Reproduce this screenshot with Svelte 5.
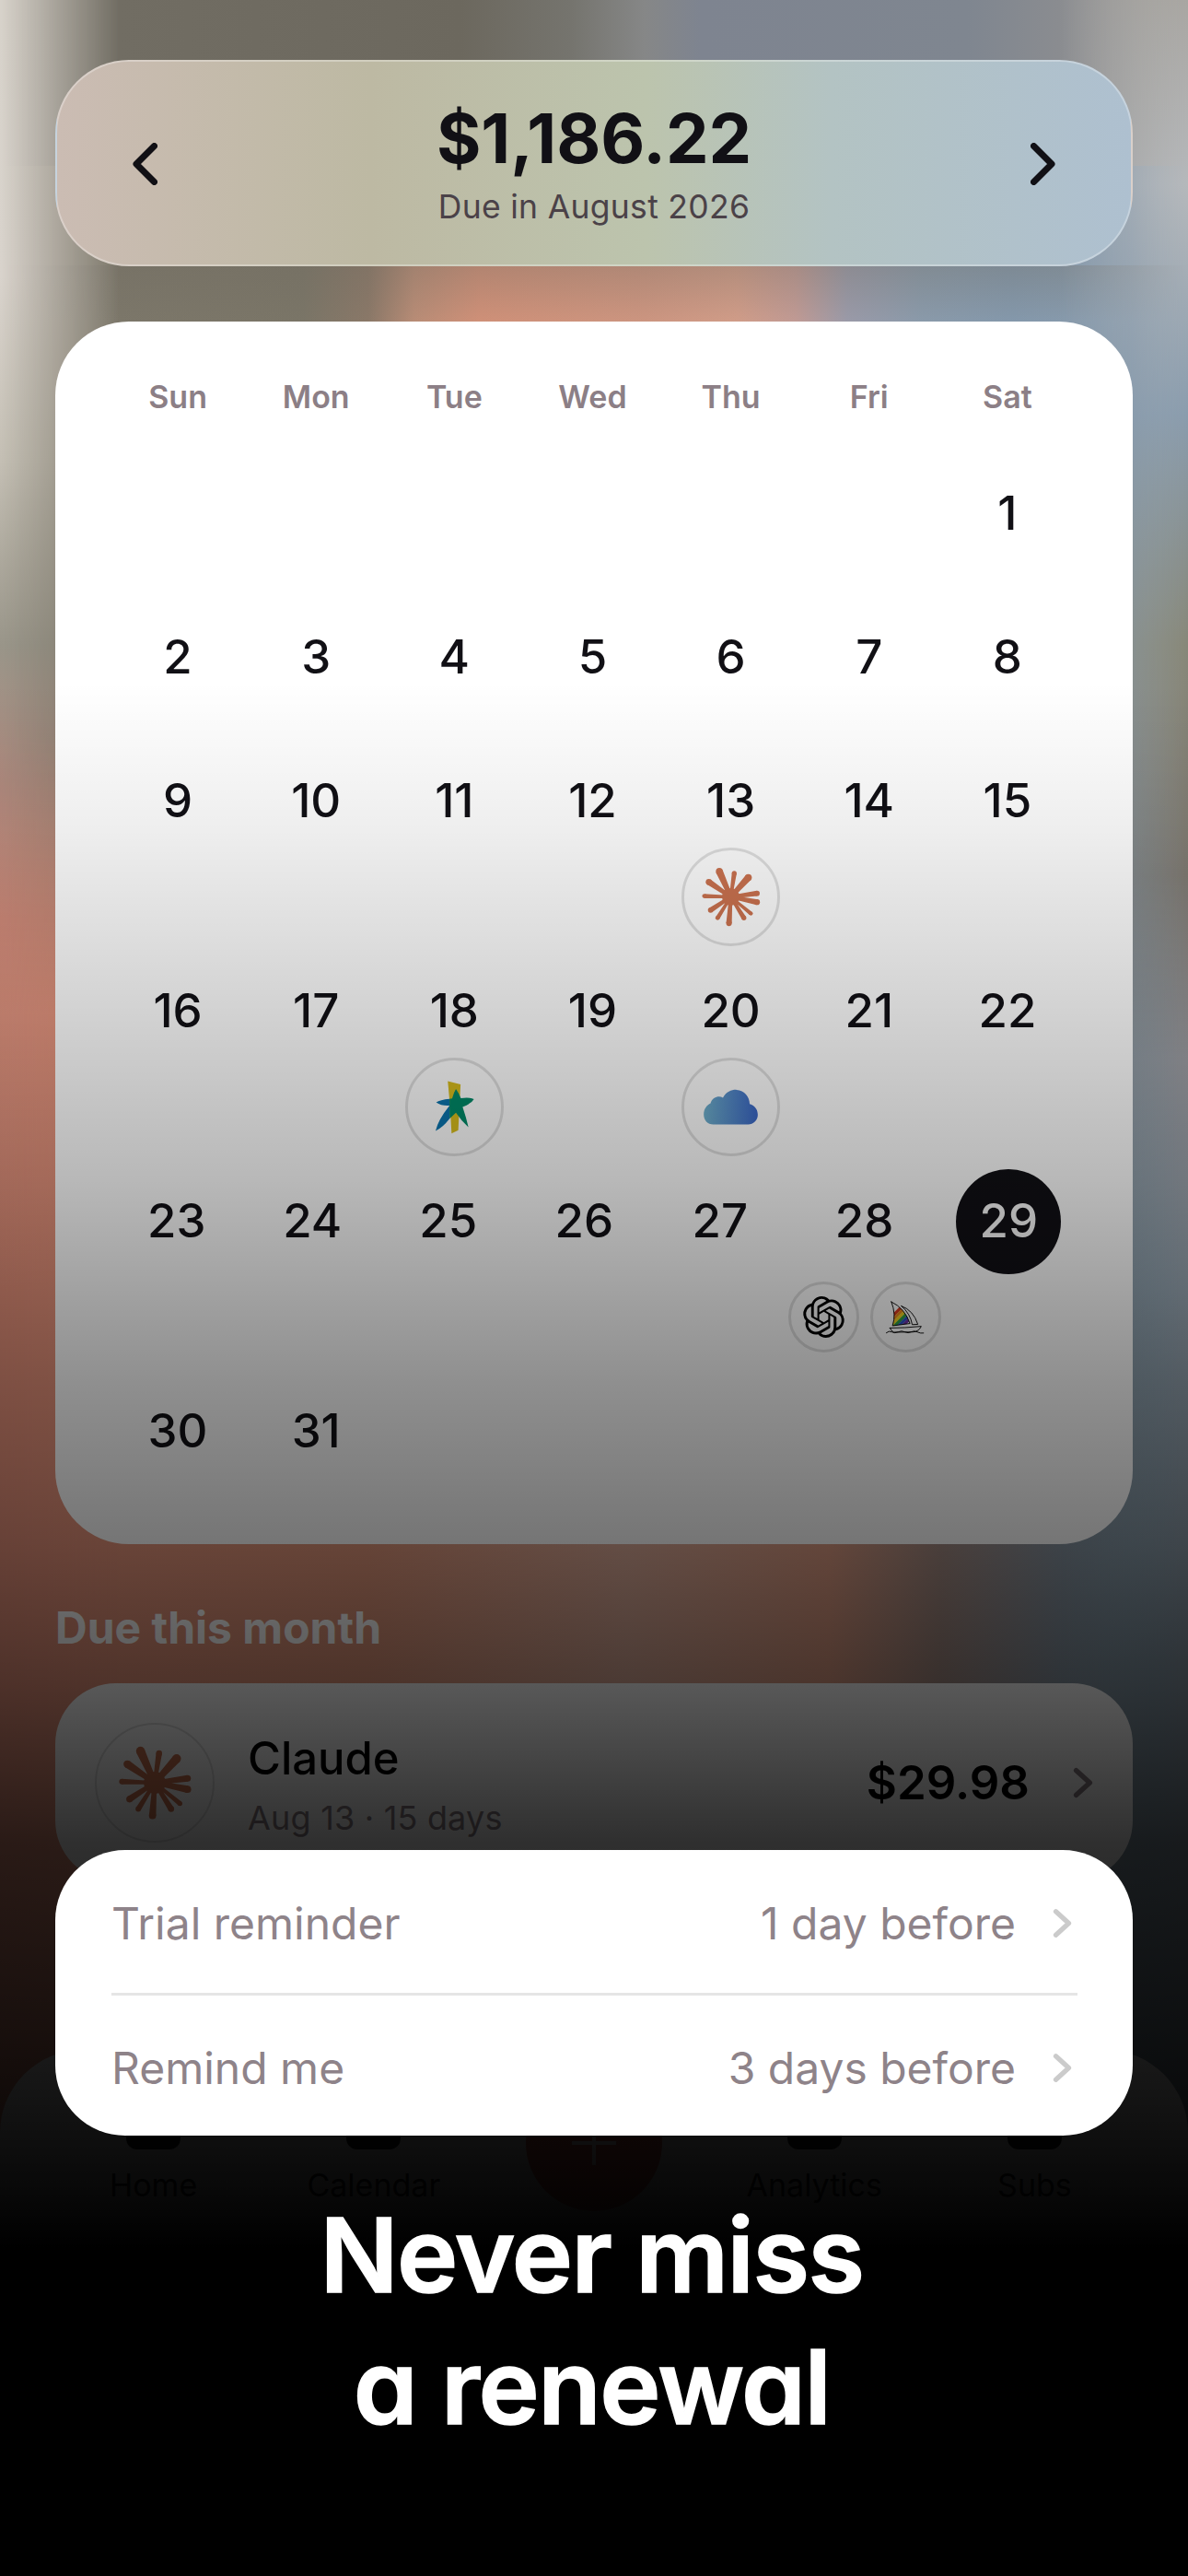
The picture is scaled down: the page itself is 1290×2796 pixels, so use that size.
<script>
  const weeks = [
    [null,null,null,null,null,null,1],
    [2,3,4,5,6,7,8],
    [9,10,11,12,{n:13,icon:'claude'},14,15],
    [16,17,{n:18,icon:'star'},19,{n:20,icon:'cloud'},21,22],
    [23,24,25,26,27,{n:28,pair:true},{n:29,today:true}],
    [30,31,null,null,null,null,null]
  ];
  const days = ['Sun','Mon','Tue','Wed','Thu','Fri','Sat'];
  const tabs = ['Home','Calendar','','Analytics','Subs'];
  const reminders = [['Trial reminder','1 day before'],['Remind me','3 days before']];
  const tips = [[-13,-29,8],[4,-27,5.5],[20,-22,8],[30,-4,6],[30,6,6.5],[23,19,4.5],[15,24,5.5],[-2,30,6.5],[-15,24,5],[-23,15,6],[-30,-1,5],[-25,-17,7]];
  const rays = tips.map(([x,y,w]) => {
    const l = Math.hypot(x,y), nx = -y/l*w/2, ny = x/l*w/2;
    return `M${(nx*.6).toFixed(1)} ${(ny*.6).toFixed(1)}L${(x+nx).toFixed(1)} ${(y+ny).toFixed(1)}L${(x-nx).toFixed(1)} ${(y-ny).toFixed(1)}L${(-nx*.6).toFixed(1)} ${(-ny*.6).toFixed(1)}Z`;
  }).join('');
  const caps = tips.map(([x,y,w]) => ({x,y,r:w/2}));
  const stripes = [['#d93a22',513],['#ee8a1c',523],['#efd01e',533],['#2f9e44',543],['#2952c4',553],['#6a2fa6',563]];
</script>

{#snippet claude()}
  <svg viewBox="-53 -53 106 106" class="logo">
    <path d={rays} fill="#cc7350"/>
    {#each caps as c}<circle cx={c.x} cy={c.y} r={c.r} fill="#cc7350"/>{/each}
    <circle r="10" fill="#cc7350"/>
  </svg>
{/snippet}

{#snippet star()}
  <svg viewBox="125 745 320 320" class="logo">
    <path d="M262 816L306 827L298 985L275 996L270 905Z" fill="#d8bd1d"/>
    <path d="M222 889Q235 880 268 877L270 900L268 945Q245 975 220 987Q228 950 268 900Q240 902 222 889Z" fill="#0a74ae"/>
    <path d="M290 843Q302 860 307 875Q335 870 352 878Q345 892 313 905Q325 940 333 975Q310 955 290 925L268 945L268 877L277 876Q282 855 290 843Z" fill="#008a68"/>
  </svg>
{/snippet}

{#snippet cloud()}
  <svg viewBox="1025 745 320 320" class="logo">
    <defs>
      <linearGradient id="cloudfill" x1="0" x2="1" y1="0" y2="0">
        <stop offset="0" stop-color="#6fb0cc"/><stop offset="1" stop-color="#3a66c6"/>
      </linearGradient>
    </defs>
    <path d="M1125 965C1105 965 1092 950 1092 930C1092 910 1105 897 1115 893C1122 870 1145 865 1158 873C1170 852 1190 845 1205 846C1232 848 1250 870 1250 895C1268 900 1278 915 1278 932C1278 952 1262 965 1245 965Z" fill="url(#cloudfill)"/>
  </svg>
{/snippet}

{#snippet openai()}
  <svg viewBox="-6.9 -6.9 37.8 37.8" class="logo">
    <path fill="#000" d="M22.2819 9.8211a5.9847 5.9847 0 0 0-.5157-4.9108 6.0462 6.0462 0 0 0-6.5098-2.9A6.0651 6.0651 0 0 0 4.9807 4.1818a5.9847 5.9847 0 0 0-3.9977 2.9 6.0462 6.0462 0 0 0 .7427 7.0966 5.98 5.98 0 0 0 .511 4.9107 6.051 6.051 0 0 0 6.5146 2.9001A5.9847 5.9847 0 0 0 13.2599 24a6.0557 6.0557 0 0 0 5.7718-4.2058 5.9894 5.9894 0 0 0 3.9977-2.9001 6.0557 6.0557 0 0 0-.7475-7.0729zm-9.022 12.6081a4.4755 4.4755 0 0 1-2.8764-1.0408l.1419-.0804 4.7783-2.7582a.7948.7948 0 0 0 .3927-.6813v-6.7369l2.02 1.1686a.071.071 0 0 1 .038.052v5.5826a4.504 4.504 0 0 1-4.4945 4.4944zm-9.6607-4.1254a4.4708 4.4708 0 0 1-.5346-3.0137l.142.0852 4.783 2.7582a.7712.7712 0 0 0 .7806 0l5.8428-3.3685v2.3324a.0804.0804 0 0 1-.0332.0615L9.74 19.9502a4.4992 4.4992 0 0 1-6.1408-1.6464zM2.3408 7.8956a4.485 4.485 0 0 1 2.3655-1.9728V11.6a.7664.7664 0 0 0 .3879.6765l5.8144 3.3543-2.0201 1.1685a.0757.0757 0 0 1-.071 0l-4.8303-2.7865A4.504 4.504 0 0 1 2.3408 7.872zm16.5963 3.8558L13.1038 8.364 15.1192 7.2a.0757.0757 0 0 1 .071 0l4.8303 2.7913a4.4944 4.4944 0 0 1-.6765 8.1042v-5.6772a.79.79 0 0 0-.407-.667zm2.0107-3.0231l-.142-.0852-4.7735-2.7818a.7759.7759 0 0 0-.7854 0L9.409 9.2297V6.8974a.0662.0662 0 0 1 .0284-.0615l4.8303-2.7866a4.4992 4.4992 0 0 1 6.6802 4.66zM8.3065 12.863l-2.02-1.1638a.0804.0804 0 0 1-.038-.0567V6.0742a4.4992 4.4992 0 0 1 7.3757-3.4537l-.142.0805L8.704 5.459a.7948.7948 0 0 0-.3927.6813zm1.0976-2.3654l2.602-1.4998 2.6069 1.4998v2.9994l-2.5974 1.4997-2.6067-1.4997Z"/>
  </svg>
{/snippet}

{#snippet boat()}
  <svg viewBox="378 423 230 232" class="logo">
    <defs>
      <clipPath id="sailclip"><path d="M442 485Q490 508 508 562L446 570Q460 530 442 485Z"/></clipPath>
    </defs>
    <g clip-path="url(#sailclip)">
      <g transform="rotate(-45 480 540)" fill="none" stroke-width="10.5">
        {#each stripes as s}<path d="M400 {s[1]}H560" stroke={s[0]}/>{/each}
      </g>
    </g>
    <g fill="none" stroke="#000" stroke-width="3" stroke-linejoin="round" stroke-linecap="round">
      <path d="M442 485Q490 508 508 562L446 570Q460 530 442 485Z"/>
      <path d="M478 500Q520 515 536 565L516 566Q510 528 478 500Z"/>
      <path d="M437 578Q490 578 548 572Q540 590 520 592L450 593Q441 588 437 578Z"/>
      <path d="M424 595Q434 586 444 592T466 592T490 592T512 592T534 592T556 596"/>
    </g>
  </svg>
{/snippet}

{#snippet chevron(cls)}
  <svg viewBox="0 0 24 36" class={cls}><path d="M4 3.5L20 18L4 32.5" fill="none" stroke="currentColor" stroke-linecap="round" stroke-linejoin="round" stroke-width="6"/></svg>
{/snippet}

<div class="page">
  <div class="bg">
    <div class="band-top"></div>
    <div class="strip-left"></div>
    <div class="strip-right"></div>
  </div>

  <header class="summary">
    <svg viewBox="0 0 27 46" class="nav"><path d="M23.5 3.5L4 23L23.5 42.5" fill="none" stroke="currentColor" stroke-width="7" stroke-linecap="round" stroke-linejoin="round"/></svg>
    <div class="totals">
      <div class="amount">$1,186.22</div>
      <div class="due">Due in August 2026</div>
    </div>
    <svg viewBox="0 0 27 46" class="nav"><path d="M3.5 3.5L23 23L3.5 42.5" fill="none" stroke="currentColor" stroke-width="7" stroke-linecap="round" stroke-linejoin="round"/></svg>
  </header>

  <section class="calendar">
    <div class="weekdays">
      {#each days as d}<div class="weekday">{d}</div>{/each}
    </div>
    {#each weeks as week, i}
      <div class="week" class:tall={i === 4}>
        {#each week as day}
          {@const n = day && typeof day === 'object' ? day.n : day}
          <div class="cell">
            {#if n}
              <div class="num" class:today={day?.today}>{n}</div>
            {/if}
            {#if day?.icon}
              <div class="badge">
                {#if day.icon === 'claude'}{@render claude()}{:else if day.icon === 'star'}{@render star()}{:else}{@render cloud()}{/if}
              </div>
            {/if}
            {#if day?.pair}
              <div class="pair">
                <div class="badge small">{@render openai()}</div>
                <div class="badge small">{@render boat()}</div>
              </div>
            {/if}
          </div>
        {/each}
      </div>
    {/each}
  </section>

  <h2 class="section">Due this month</h2>

  <div class="subscription">
    <div class="sub-icon">{@render claude()}</div>
    <div class="sub-text">
      <div class="sub-name">Claude</div>
      <div class="sub-date">Aug 13 · 15 days</div>
    </div>
    <div class="sub-price">$29.98</div>
    {@render chevron('sub-chevron')}
  </div>

  <nav class="tabbar">
    {#each tabs as t}
      <div class="tab">
        {#if t}
          <div class="tab-icon"></div>
          <div class="tab-label">{t}</div>
        {:else}
          <div class="add"><span class="plus"></span></div>
        {/if}
      </div>
    {/each}
  </nav>

  <div class="fade"></div>

  <div class="promo">
    <div class="reminders">
      {#each reminders as r, i}
        {#if i}<div class="divider"></div>{/if}
        <div class="reminder" class:second={i === 1}>
          <span class="r-label">{r[0]}</span>
          <span class="r-value">{r[1]}</span>
          {@render chevron('r-chevron')}
        </div>
      {/each}
    </div>
    <h1 class="headline"><span>Never miss</span><span>a renewal</span></h1>
  </div>
</div>

<style>
  :global(body) { margin: 0; background: #000; }
  .page {
    position: relative;
    width: 1290px;
    height: 2796px;
    overflow: hidden;
    font-family: Inter, "Liberation Sans", sans-serif;
    color: #111015;
    display: flow-root;
    background: #000;
  }
  .bg {
    position: absolute;
    inset: 0;
    background: linear-gradient(90deg, #e8947c 0, #dd9479 400px, #d8a896 680px, #d89880 900px, #a08880 1020px, #84909c 1150px, #80a0b0 1290px);
  }
  .band-top {
    position: absolute;
    inset: 0;
    background:
      linear-gradient(180deg, rgba(110,105,95,.3), rgba(110,105,95,0)) 0 288px / 100% 61px no-repeat,
      linear-gradient(90deg, #716d63 130px, #6c685e 500px, #75746e 620px, #868787 700px, #7e8490 760px, #7f8690 1050px, #8a8c90 1150px, #aeaba6 1290px) 0 0 / 100% 180px no-repeat,
      linear-gradient(90deg, #7c776a 100px, #7a7567 330px, #8a7868 400px, #b88c76 450px, #cf9078 520px, #cc9580 700px, #d09c88 800px, #c09a94 864px, #9a9aa8 920px, #8a9aaa 1000px, #8498ab 1100px, #8a9cad 1230px, #a0adb6 1290px) 0 180px / 100% 2616px no-repeat;
    -webkit-mask-image: linear-gradient(180deg, #000 800px, transparent 1100px);
    mask-image: linear-gradient(180deg, #000 800px, transparent 1100px);
  }
  .strip-left {
    position: absolute;
    inset: 0;
    background: linear-gradient(180deg, #d8d3cb 0, #dad4cd 300px, #c5c0b5 500px, #9a968a 700px, #b18c80 850px, #d48d7c 1000px, #e29682 1100px, #e08e78 1400px);
    -webkit-mask-image: linear-gradient(90deg, #000 0, transparent 130px);
    mask-image: linear-gradient(90deg, #000 0, transparent 130px);
  }
  .strip-right {
    position: absolute;
    inset: 0;
    background: linear-gradient(180deg, #a8a6a2 0, #b5b8bb 200px, #8a9cad 450px, #878778 700px, #827c74 950px, #a0a0a5 1150px, #9aa8b4 1400px, #7e8c98 1800px);
    -webkit-mask-image: linear-gradient(270deg, #000 0, transparent 140px);
    mask-image: linear-gradient(270deg, #000 0, transparent 140px);
  }
  .summary {
    position: relative;
    box-sizing: border-box;
    height: 224px;
    margin: 65px 60px 0;
    padding: 0 82px 0 82px;
    display: flex;
    align-items: center;
    justify-content: space-between;
    border: 2px solid rgba(255,255,255,.3);
    border-radius: 80px;
    background: linear-gradient(90deg, #cbbcb3 0, #bdb9a3 340px, #bcc4ad 640px, #b3c3c3 840px, #aec0d0 1170px);
  }
  .nav { width: 27px; height: 46px; color: #111015; margin-top: 2px; }
  .totals { text-align: center; }
  .amount { font-size: 74px; font-weight: 700; line-height: 86px; }
  .due { font-size: 35.5px; font-weight: 400; line-height: 44px; letter-spacing: .3px; color: #4b4248; margin-top: 10px; }
  .calendar {
    position: relative;
    box-sizing: border-box;
    height: 1327px;
    margin: 60px 60px 0;
    padding: 58px 61px 0 58px;
    background: #fff;
    border-radius: 80px;
  }
  .weekdays { display: flex; margin-bottom: 50px; padding-top: 2px; height: 42px; }
  .weekday {
    flex: 1 1 0;
    text-align: center;
    font-size: 34px;
    font-weight: 600;
    line-height: 44px;
    color: #8c7f86;
  }
  .week { display: flex; min-height: 142px; margin-bottom: 14px; }
  .week.tall { min-height: 214px; }
  .cell { flex: 1 1 0; display: flex; flex-direction: column; align-items: center; }
  .num {
    box-sizing: border-box;
    width: 114px;
    height: 114px;
    padding-bottom: 3px;
    display: flex;
    align-items: center;
    justify-content: center;
    font-size: 51px;
    font-weight: 500;
    border-radius: 50%;
  }
  .num.today { background: #111015; color: #fff; }
  .badge {
    box-sizing: border-box;
    width: 107px;
    height: 107px;
    margin-top: -7px;
    border: 3px solid rgba(0,0,0,.12);
    border-radius: 50%;
    flex: none;
    overflow: hidden;
  }
  .badge.small { width: 77px; height: 77px; margin: 0; }
  .pair { display: flex; gap: 12px; margin-top: 8px; }
  .logo { display: block; width: 100%; height: 100%; }
  .section {
    position: relative;
    margin: 62px 60px 31px;
    font-size: 48px;
    font-weight: 700;
    line-height: 58px;
    color: #fff;
  }
  .subscription {
    position: relative;
    box-sizing: border-box;
    height: 215px;
    margin: 0 60px;
    padding: 0 43px;
    display: flex;
    align-items: center;
    background: #fff;
    border-radius: 66px;
  }
  .sub-icon {
    box-sizing: border-box;
    width: 130px;
    height: 130px;
    border: 2px solid rgba(0,0,0,.12);
    border-radius: 50%;
    flex: none;
  }
  .sub-text { margin-left: 36px; flex: 1; padding-top: 4px; }
  .sub-name { font-size: 49px; font-weight: 500; line-height: 60px; color: #000; }
  .sub-date { font-size: 36px; line-height: 44px; letter-spacing: .2px; color: #8c7f86; margin-top: 12px; }
  .sub-price { font-size: 51px; font-weight: 600; color: #000; margin-right: 47px; }
  :global(.sub-chevron) { width: 22px; height: 36px; color: #8c7f86; flex: none; }
  .tabbar {
    position: relative;
    box-sizing: border-box;
    display: flex;
    height: 300px;
    margin-top: 183px;
    padding: 49px 47px 0;
    background: #fff;
    border-radius: 90px 90px 0 0;
  }
  .tab { flex: 1 1 0; display: flex; flex-direction: column; align-items: center; }
  .tab-icon { width: 59px; height: 59px; border-radius: 12px; background: #111; }
  .tab-label { font-size: 34px; line-height: 36px; margin-top: 21px; color: #111; }
  .add {
    display: flex;
    align-items: center;
    justify-content: center;
    width: 148px;
    height: 148px;
    margin-top: -22px;
    border-radius: 50%;
    background: #e06050;
  }
  .plus {
    width: 48px;
    height: 48px;
    background:
      linear-gradient(#fff, #fff) center / 100% 4px no-repeat,
      linear-gradient(#fff, #fff) center / 4px 100% no-repeat;
  }
  .fade {
    position: absolute;
    inset: 0;
    background: linear-gradient(180deg,
      rgba(0,0,0,0) 740px,
      rgba(0,0,0,.065) 900px,
      rgba(0,0,0,.28) 1280px,
      rgba(0,0,0,.44) 1500px,
      rgba(0,0,0,.54) 1676px,
      rgba(0,0,0,.655) 1827px,
      rgba(0,0,0,.815) 2000px,
      rgba(0,0,0,.89) 2200px,
      rgba(0,0,0,.965) 2370px,
      rgba(0,0,0,1) 2440px);
  }
  .promo { position: absolute; top: 2008px; left: 60px; right: 60px; }
  .reminders {
    box-sizing: border-box;
    height: 309.5px;
    padding-top: 4px;
    background: #fff;
    border-radius: 76px;
  }
  .reminder {
    box-sizing: border-box;
    height: 151px;
    margin: 0 60px 0 61px;
    display: flex;
    align-items: center;
    color: #8e8389;
    font-size: 48px;
  }
  .reminder.second { padding-top: 5px; }
  .r-label { flex: 1; }
  :global(.r-chevron) { width: 21px; height: 35px; margin-left: 40px; color: #cbcbcb; flex: none; margin-right: 6px; }
  .divider { height: 3px; margin: 0 60px 0 61px; background: #e5e5e5; }
  .headline {
    margin: 74px 0 0;
    padding-right: 5px;
    text-align: center;
    color: #fff;
    font-size: 112px;
    font-weight: 600;
    letter-spacing: -1.5px;
    font-feature-settings: "cv11" 1;
    -webkit-text-stroke: 1.5px #fff;
  }
  .headline span { display: block; line-height: 110px; }
  .headline span + span { margin-top: 33px; }
</style>
